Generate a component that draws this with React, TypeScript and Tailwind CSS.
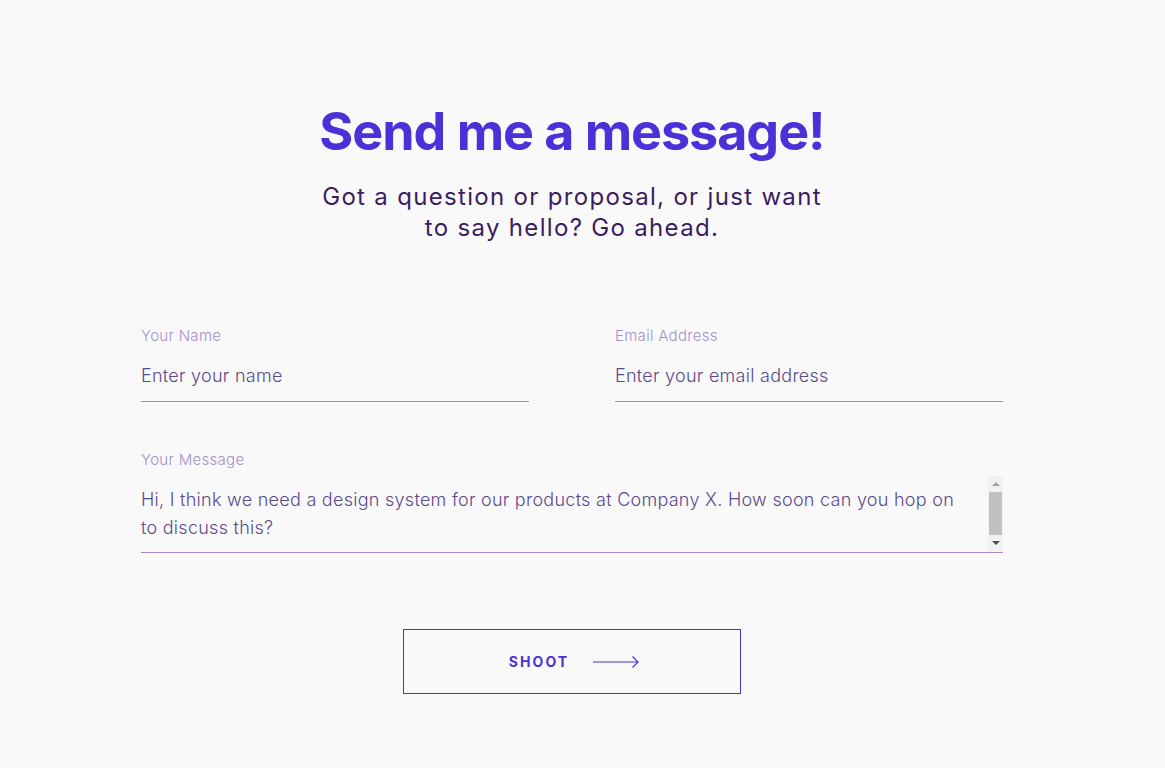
import { useState } from "react";

const font = { fontFamily: "Inter, 'Noto Sans', sans-serif" };

function Field({
  label,
  placeholder,
}: {
  label: string;
  placeholder: string;
}) {
  return (
    <label className="flex flex-col">
      <span className="text-[15px] leading-5 font-light tracking-[0.02em] text-[#a591c6]">{label}</span>
      <input
        placeholder={placeholder}
        className="mt-[10px] h-[46px] pb-[6px] bg-transparent border-b border-[#a093b8] text-[18px] font-light tracking-[0.015em] text-[#5b4a8c] placeholder:text-[#5b4a8c] outline-none"
      />
    </label>
  );
}

// textarea scrollbar, drawn to look like the classic one
function FakeScrollbar() {
  return (
    <div className="pointer-events-none absolute right-0 top-0 bottom-[2px] flex w-[15px] flex-col items-center bg-[#f1f1f1]">
      <div className="flex h-[16px] items-center justify-center">
        <div className="h-0 w-0 border-x-[4px] border-b-[4px] border-x-transparent border-b-[#a3a3a3]" />
      </div>
      <div className="w-[13px] flex-1 bg-[#c1c1c1]" />
      <div className="flex h-[16px] items-center justify-center">
        <div className="h-0 w-0 border-x-[4px] border-t-[4px] border-x-transparent border-t-[#505050]" />
      </div>
    </div>
  );
}

export default function App() {
  const [message, setMessage] = useState(
    "Hi, I think we need a design system for our products at Company X. How soon can you hop on to discuss this?"
  );

  return (
    <div className="min-h-[768px] w-full bg-[#f9f9f9]" style={font}>
      <div className="w-[1144px]">
        <div className="mx-auto flex w-[862px] flex-col items-center pt-[101px]">
          <h1 className="text-[52px] leading-[62px] font-bold tracking-[-0.02em] text-[#4a31d8]">
            Send me a message!
          </h1>
          <p className="mt-[18px] w-[510px] text-center text-[24px] leading-[31px] tracking-[0.055em] text-[#3b1d60]">
            Got a question or proposal, or just want to say hello? Go ahead.
          </p>

          <form className="mt-[83px] w-full" onSubmit={(e) => e.preventDefault()}>
            <div className="grid grid-cols-2 gap-[86px]">
              <Field label="Your Name" placeholder="Enter your name" />
              <Field label="Email Address" placeholder="Enter your email address" />
            </div>

            <label className="mt-[48px] flex flex-col">
              <span className="text-[15px] leading-5 font-light tracking-[0.02em] text-[#a591c6]">
                Your Message
              </span>
              <div className="relative mt-[6px]">
                <textarea
                  value={message}
                  onChange={(e) => setMessage(e.target.value)}
                  className="block h-[77px] w-full resize-none overflow-hidden bg-transparent border-b border-[#a587c9] pt-[10px] pr-[40px] text-[18px] leading-[28px] font-light tracking-[0.015em] text-[#5b4a8c] outline-none"
                />
                <FakeScrollbar />
              </div>
            </label>

            <div className="mt-[76px] flex justify-center">
              <button
                type="submit"
                className="flex h-[65px] w-[338px] items-center justify-center gap-[24px] border border-[#4a31d8] text-[#4a31d8]"
              >
                <span className="pl-[4px] text-[14px] font-bold tracking-[0.15em]">SHOOT</span>
                <svg width="46" height="12" viewBox="0 0 46 12" fill="none">
                  <path d="M0 6H45M39.5 0.5L45 6L39.5 11.5" stroke="#4a31d8" strokeWidth="1.2" />
                </svg>
              </button>
            </div>
          </form>
        </div>
      </div>
    </div>
  );
}
